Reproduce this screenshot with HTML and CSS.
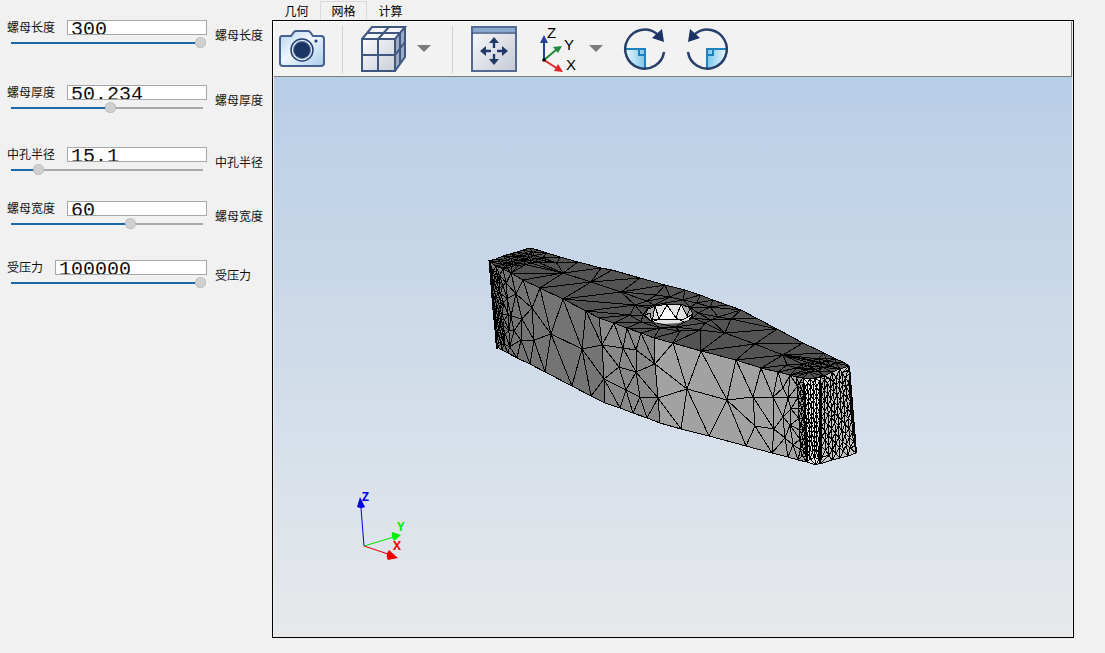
FILE: index.html
```html
<!DOCTYPE html>
<html lang="zh-CN">
<head>
<meta charset="utf-8">
<title>网格</title>
<link rel="stylesheet" href="styles.css">
</head>
<body>
<main class="app">
  <form class="params">
    <div class="param">
      <label class="name" for="len">螺母长度</label>
      <input class="value" id="len" type="text" value="300">
      <input class="slider p99" type="range" min="0" max="100" value="100" aria-label="螺母长度">
      <span class="caption">螺母长度</span>
    </div>
    <div class="param">
      <label class="name" for="thick">螺母厚度</label>
      <input class="value" id="thick" type="text" value="50.234">
      <input class="slider p51" type="range" min="0" max="100" value="51" aria-label="螺母厚度">
      <span class="caption">螺母厚度</span>
    </div>
    <div class="param">
      <label class="name" for="hole">中孔半径</label>
      <input class="value" id="hole" type="text" value="15.1">
      <input class="slider p14" type="range" min="0" max="100" value="12" aria-label="中孔半径">
      <span class="caption">中孔半径</span>
    </div>
    <div class="param">
      <label class="name" for="wide">螺母宽度</label>
      <input class="value" id="wide" type="text" value="60">
      <input class="slider p61" type="range" min="0" max="100" value="62" aria-label="螺母宽度">
      <span class="caption">螺母宽度</span>
    </div>
    <div class="param">
      <label class="name" for="force">受压力</label>
      <input class="value" id="force" type="text" value="100000">
      <input class="slider p99" type="range" min="0" max="100" value="100" aria-label="受压力">
      <span class="caption">受压力</span>
    </div>
  </form>

  <section class="view">
    <nav class="tabs">
      <button class="tab" type="button">几何</button>
      <button class="tab active" type="button">网格</button>
      <button class="tab" type="button">计算</button>
    </nav>
    <div class="frame">
      <div class="toolbar">
        <button class="tool camera" type="button" aria-label="camera">
          <svg width="46" height="38" viewBox="0 0 46 38">
            <defs><linearGradient id="cam" x1="0" y1="0" x2="1" y2="1"><stop offset="0" stop-color="#b4d2ee"/><stop offset=".45" stop-color="#eef6fd"/><stop offset="1" stop-color="#a9cbea"/></linearGradient></defs>
            <path d="M3 6H12L15 2Q16 1 17 1H29Q30 1 31 2L34 6H42Q45 6 45 9V33Q45 36 42 36H4Q1 36 1 33V9Q1 6 3 6Z" fill="url(#cam)" stroke="#45618f" stroke-width="2"/>
            <circle cx="23" cy="20" r="11" fill="#e4eef8" stroke="#243f70" stroke-width="1.5"/>
            <circle cx="23" cy="20" r="8.5" fill="#1c3464" stroke="#5b78a5"/>
            <circle cx="37" cy="11" r="1.6" fill="#243f70"/>
          </svg>
        </button>
        <span class="sep"></span>
        <button class="tool cube" type="button" aria-label="cube">
          <svg width="46" height="46" viewBox="0 0 46 46">
            <defs><linearGradient id="cf" x1="0" y1="0" x2="1" y2="1"><stop offset="0" stop-color="#fbfbfc"/><stop offset="1" stop-color="#c9ced8"/></linearGradient></defs>
            <path d="M2 13H35V45H2Z" fill="url(#cf)"/><path d="M2 13L12 1H45L35 13Z" fill="#f4f5f8"/><path d="M35 13L45 1V31L35 45Z" fill="#9daac2"/>
            <g fill="none" stroke="#3e5680" stroke-width="2"><path d="M2 13H35V45H2ZL12 1H45L35 13M45 1V31L35 45M18 13V45M2 29H35L45 16M18 13L29 1M7 7H40V38"/></g>
          </svg>
        </button>
        <button class="drop" type="button" aria-label="more"><svg width="14" height="8" viewBox="0 0 14 8"><path d="M0 0H14L7 7Z" fill="#7b7b7b"/></svg></button>
        <span class="sep"></span>
        <button class="tool fit" type="button" aria-label="fit">
          <svg width="46" height="46" viewBox="0 0 46 46">
            <defs><linearGradient id="ff" x1="0" y1="0" x2="1" y2="1"><stop offset="0" stop-color="#fafafb"/><stop offset="1" stop-color="#c5cad5"/></linearGradient></defs>
            <path d="M1 1H45V45H1Z" fill="url(#ff)" stroke="#526b93" stroke-width="2"/><path d="M2 2H44V6H2Z" fill="#8ba7d0"/><path d="M1 7H45" stroke="#3e5680" stroke-width="1.5"/>
            <g fill="#1f3a68"><path d="M23 11L28 17H24.2V22H21.8V17H18ZM23 39L28 33H24.2V28H21.8V33H18ZM9 25L15 20V23.8H20V26.2H15V30ZM37 25L31 20V23.8H26V26.2H31V30Z"/></g>
          </svg>
        </button>
        <button class="tool axes" type="button" aria-label="axes">
          <svg width="38" height="48" viewBox="0 0 38 48">
            <g stroke-width="2" fill="none"><path d="M5 35V14" stroke="#243f9c"/><path d="M5 35L17 25" stroke="#1f8a3e"/><path d="M5 35L19 44" stroke="#e02424"/></g>
            <path d="M5 10L9 18H1Z" fill="#243f9c"/><path d="M23 21L19 28L14 22Z" fill="#1f8a3e"/><path d="M24 47L15 46L19 39Z" fill="#e02424"/><circle cx="5" cy="35" r="1.8"/>
            <text class="axis-label" x="8" y="13">Z</text><text class="axis-label" x="25" y="25">Y</text><text class="axis-label" x="27" y="45">X</text>
          </svg>
        </button>
        <button class="drop near" type="button" aria-label="more"><svg width="14" height="8" viewBox="0 0 14 8"><path d="M0 0H14L7 7Z" fill="#7b7b7b"/></svg></button>
        <button class="tool cw" type="button" aria-label="rotate right">
          <svg width="42" height="42" viewBox="0 0 42 42">
            <defs><linearGradient id="rot"><stop offset="0" stop-color="#e8f6fd"/><stop offset="1" stop-color="#7cc5ea"/></linearGradient></defs>
            <g id="rotate"><path d="M2 21H21V40A19 19 0 0 1 2 21Z" fill="url(#rot)"/><path d="M2 21H21V40M15 21V27H21" fill="none" stroke="#1d82bd" stroke-width="2"/>
            <path d="M40 24A19.500 19.500 0 1 1 33 6" fill="none" stroke="#263f6b" stroke-width="2.500"/><path d="M38 1L40 14L28 10Z" fill="#1c3464"/></g>
          </svg>
        </button>
        <button class="tool ccw" type="button" aria-label="rotate left">
          <svg width="42" height="42" viewBox="0 0 42 42"><use href="#rotate" transform="translate(42 0) scale(-1 1)"/></svg>
        </button>
      </div>
      <div class="scene">
        <svg class="model" viewBox="274 77 798 560">
          <g id="mesh"></g>
          <g class="triad">
            <path d="M364 546L361 508" stroke="#0000e0"/><path d="M364 546L394 537" stroke="#00e000"/><path d="M364 546L388 554" stroke="#e00000"/>
            <path d="M360 497L365 507Q361 509 357 507Z" fill="#0000f0"/><path d="M401 535L394 541Q391 537 392 532Z" fill="#00f000"/><path d="M398 558L388 560Q385 555 389 550Z" fill="#f00000"/>
            <text x="362" y="501" fill="#0000f0">Z</text><text x="397" y="531" fill="#00f000">Y</text><text x="393" y="550" fill="#f00000">X</text>
          </g>
        </svg>
      </div>
    </div>
  </section>
</main>
<script src="mesh.js"></script>
</body>
</html>
```
FILE: styles.css
```css
* { box-sizing: border-box; }
body {
  margin: 0;
  background: #f1f1f1;
  color: #111;
  font: 12px/16px "Liberation Sans", "Noto Sans CJK SC", sans-serif;
}
.app { display: flex; min-height: 100vh; }
.params {
  display: grid;
  grid-template-rows: 65px 62px 54px 59px 40px;
  flex: 0 0 272px;
  align-content: start;
  padding: 20px 9px 0 7px;
}
.param {
  display: grid;
  grid-template-columns: auto 1fr 48px;
  grid-template-rows: 15px 16px;
  column-gap: 8px;
  align-content: start;
}
.name { margin-right: 4px; }
.value {
  width: 100%;
  min-width: 0;
  height: 15px;
  padding: 4px 3px 0;
  border: 1px solid #a8a8a8;
  border-radius: 0;
  background: #fff;
  color: #111;
  font: 20px/24px "Liberation Mono", monospace;
}
.caption { grid-column: 3; grid-row: 1 / 3; align-self: center; }
.slider {
  grid-column: 1 / 3;
  grid-row: 2;
  appearance: none;
  width: 100%;
  height: 16px;
  margin: 0;
  padding: 0 1px 0 4px;
  background: transparent;
}
.slider::-webkit-slider-runnable-track {
  height: 2px;
  background: linear-gradient(to right, #1b67a8 var(--fill), #a9a9a9 var(--fill) calc(100% - 3px), transparent calc(100% - 3px));
}
.slider::-webkit-slider-thumb {
  appearance: none;
  width: 11px;
  height: 11px;
  margin-top: -5px;
  border: 1px dotted #aaa;
  border-radius: 50%;
  background: #d0d0d0;
}
.p99 { --fill: 97%; }
.p51 { --fill: 51%; }
.p14 { --fill: 14%; }
.p61 { --fill: 61%; }

.view { display: flex; flex: 1; flex-direction: column; min-width: 0; padding: 1px 31px 15px 0; }
.tabs { display: flex; height: 19px; padding-left: 1px; }
.tab {
  width: 47px;
  padding: 3px 0 0;
  border: 0;
  background: none;
  color: #000;
  font: inherit;
}
.tab.active { border: 1px solid #dadada; border-bottom: 0; padding-top: 2px; }
.frame { display: flex; flex: 1; flex-direction: column; padding-right: 1px; border: 1px solid #000; }
.toolbar {
  display: flex;
  align-items: center;
  height: 56px;
  padding-left: 5px;
  border: 1px solid #fff;
  border-right-color: #808080;
  border-bottom-color: #808080;
  background: #f2f2f2;
}
.tool, .drop { flex: none; padding: 0; border: 0; background: none; }
.tool svg, .drop svg { display: block; overflow: visible; }
.sep { width: 1px; height: 47px; background: #d0d0d0; }
.camera { margin-right: 17px; }
.cube { margin: 0 11px 0 17px; }
.drop { margin-right: 21px; }
.fit { margin: 0 22px 0 18px; }
.axes { margin-right: 12px; }
.near { margin-right: 21px; }
.cw { margin-right: 20px; }
.axis-label { font: 15px "Liberation Sans", sans-serif; }
.scene { flex: 1; min-height: 0; margin-left: 1px; background: linear-gradient(#b8cee7, #e7e9eb); }
.model { display: block; width: 100%; height: 100%; }
.face { stroke: none; }
.wire { fill: none; stroke: #000; stroke-width: 1; shape-rendering: crispEdges; }
.rim { stroke-width: 2; }
.triad { fill: none; }
.triad text { font: bold 12px "Open Sans", "DejaVu Sans", sans-serif; }
```
FILE: mesh.js
```javascript
const NS = 'http://www.w3.org/2000/svg';
const root = document.getElementById('mesh');

function add(parent, tag, attrs) {
  const el = document.createElementNS(NS, tag);
  for (const k in attrs) el.setAttribute(k, attrs[k]);
  parent.appendChild(el);
  return el;
}

let seed = 7;
function random() {
  seed = (seed * 16807) % 2147483647;
  return seed / 2147483647;
}

function circum(a, b, c) {
  const d = 2 * (a[0] * (b[1] - c[1]) + b[0] * (c[1] - a[1]) + c[0] * (a[1] - b[1]));
  if (Math.abs(d) < 1e-9) return null;
  const A = a[0] * a[0] + a[1] * a[1], B = b[0] * b[0] + b[1] * b[1], C = c[0] * c[0] + c[1] * c[1];
  const x = (A * (b[1] - c[1]) + B * (c[1] - a[1]) + C * (a[1] - b[1])) / d;
  const y = (A * (c[0] - b[0]) + B * (a[0] - c[0]) + C * (b[0] - a[0])) / d;
  return [x, y, (a[0] - x) ** 2 + (a[1] - y) ** 2];
}

// Bowyer-Watson triangulation in the plane of the face; m maps view coordinates to that plane.
function triangulate(points, m) {
  const p = points.map(([x, y]) => [
    m[0] * x + m[1] * y + random() * 0.01,
    m[2] * x + m[3] * y + random() * 0.01
  ]);
  const n = p.length;
  p.push([-20000, -20000], [30000, -20000], [500, 40000]);
  let tris = [{ v: [n, n + 1, n + 2], c: circum(p[n], p[n + 1], p[n + 2]) }];
  for (let i = 0; i < n; i++) {
    const edges = new Map();
    tris = tris.filter(t => {
      if ((p[i][0] - t.c[0]) ** 2 + (p[i][1] - t.c[1]) ** 2 >= t.c[2]) return true;
      for (let k = 0; k < 3; k++) {
        const e = [t.v[k], t.v[(k + 1) % 3]].sort((a, b) => a - b);
        const key = e.join();
        if (edges.has(key)) edges.delete(key); else edges.set(key, e);
      }
      return false;
    });
    for (const [a, b] of edges.values()) {
      const c = circum(p[a], p[b], p[i]);
      if (c) tris.push({ v: [a, b, i], c });
    }
  }
  return tris.map(t => t.v).filter(v => v.every(k => k < n));
}

let faces = 0;
function face(fill, outline, inner, m) {
  const pts = outline.concat(inner);
  const d = 'M' + outline.map(q => q.join(' ')).join('L') + 'Z';
  const id = 'face' + faces++;
  add(add(root, 'clipPath', { id }), 'path', { d });
  add(root, 'path', { class: 'face', d, fill });
  let wire = '';
  for (const v of triangulate(pts, m)) {
    wire += 'M' + v.map(k => pts[k].join(' ')).join('L') + 'Z';
  }
  add(root, 'path', { class: 'wire', d: wire, 'clip-path': `url(#${id})` });
  add(root, 'path', { class: 'wire', d });
}

// Staggered rows of points inside a quadrilateral.
function fill(tl, tr, br, bl, cols, rows) {
  const out = [];
  for (let r = 1; r < rows; r++) for (let c = 0; c < cols; c++) {
    const u = (c + 0.5 + (r % 2 ? 0.25 : -0.25)) / cols, v = (r + (random() - 0.5) * 0.5) / rows;
    out.push([0, 1].map(k => Math.round(((tl[k] * (1 - u) + tr[k] * u) * (1 - v) + (bl[k] * (1 - u) + br[k] * u) * v) * 10) / 10));
  }
  return out;
}

const TOP = [0.4, 1.485, 0.579, -1.559];
const FRONT = [1, 0, -0.2, 0.58];
const END = [1.4, 0, 0.2, 0.6];

// top
face('#535353', [
  [489,261],[496,259],[503,256],[510,254],[517,252],[523,250],[530,248],[538,250],[547,253],[560,257],[578,262],[601,268],[612,270],[640,278],[665,285],[685,290],[700,295],[713,300],[727,305],[741,310],[756,318],[777,329],[803,343],[824,353],[836,359],[843,362],[849,366],
  [840,369],[832,372],[824,376],[815,378],[803,378],[796,377],[790,375],[778,372],[761,368],[736,360],[701,351],[673,343],[654,338],[641,333],[627,328],[614,323],[599,318],[586,311],[563,299],[540,288],[523,280],[511,273],[503,269],[496,266]
], [
  [557,263],[563,273],[591,282],[621,292],[656,295],[725,333],[731,319],[755,344],[783,355],[787,365],[718,317],[710,307],[697,303],[705,323],[700,330],[680,331],[660,328],[643,315],[641,322],[635,305],[647,301],[670,297],[690,307],[812,361],[806,370],[797,368],[820,363],[818,371],[829,366],[836,363],[698,313],[711,320],[648,308],[675,327],[630,315],[654,305],[683,300],[652,322],[693,318],
  ...fill([494,261],[530,250],[552,262],[508,270],7,5), ...fill([795,360],[820,355],[844,365],[806,377],5,4)
], TOP);
// front, left bevel
face('#747474', [
  [489,261],[496,266],[503,269],[511,273],[523,280],[540,288],[563,299],[586,311],[599,318],[602,345],[604,379],[605,403],[591,396],[572,386],[545,372],[530,364],[517,358],[508,353],[502,350],[497,347],[495,330],[493,310],[491,285]
], [
  [516,294],[532,308],[511,316],[522,319],[551,334],[534,340],[521,340],[582,349],[514,331],[506,283],
  ...fill([490,264],[500,270],[505,350],[497,346],3,16), ...fill([500,270],[508,275],[512,354],[504,350],1,10)
], FRONT);
// front, middle
face('#898989', [
  [599,318],[614,323],[627,328],[641,333],[654,338],[655,364],[658,398],[660,423],[647,418],[633,413],[620,408],[605,403],[604,379],[602,345]
], [[623,348],[636,350],[619,367],[636,372],[626,390],[640,397]], FRONT);
// front, right
face('#a2a2a2', [
  [654,338],[673,343],[701,351],[736,360],[761,368],[778,372],[790,375],[796,377],[803,378],[804,400],[805,420],[806,440],[807,462],[798,460],[788,457],[772,453],[746,446],[709,436],[681,429],[660,423],[658,398],[655,364]
], [
  [687,389],[727,400],[753,397],[773,397],[755,426],[774,429],[783,388],[791,409],[783,417],[793,445],[785,438],[788,398],[790,425],
  ...fill([796,377],[804,378],[807,462],[800,460],2,16)
], FRONT);
// rounded corner and end
const rim = [];
for (let i = 1; i < 12; i++) rim.push([849 + i * 7 / 12, 366 + i * 87 / 12]);
face('#ececec', [[803,378],[810,379],[815,378],[821,377],[820,463],[816,465],[807,462]], fill([803,378],[821,377],[820,463],[807,463],3,18), END);
face('#c4c4c4', [[820,377],[824,376],[832,372],[840,369],[849,366], ...rim, [856,453],[848,456],[840,458],[832,460],[820,464]], fill([820,377],[849,366],[856,452],[820,463],5,17), END);
add(root, 'path', { class: 'wire rim', d: 'M849 366L856 453M490 261L497 349' });
// hole
add(root, 'path', { class: 'face', fill: '#e2e2e2', d: 'M645 315L648 309L656 306L668 304L681 304L690 308L693 314L689 320L679 323L665 324L652 322Z' });
add(root, 'path', { class: 'face', fill: '#a6a6a6', d: 'M645 315L648 309L655 306L652 322ZM681 304L690 308L693 314L687 316Z' });
add(root, 'path', { class: 'face', fill: '#fafafa', d: 'M667 305L659 319H676Z' });
add(root, 'path', { class: 'wire', d: 'M645 315L648 309L656 306L668 304L681 304L690 308L693 314L689 320M652 322L645 315L650 313L652 322L655 306L659 319L667 305L676 318L681 304L687 316L690 308M652 319H684L693 314M659 319L652 322M676 318L684 322' });
```
